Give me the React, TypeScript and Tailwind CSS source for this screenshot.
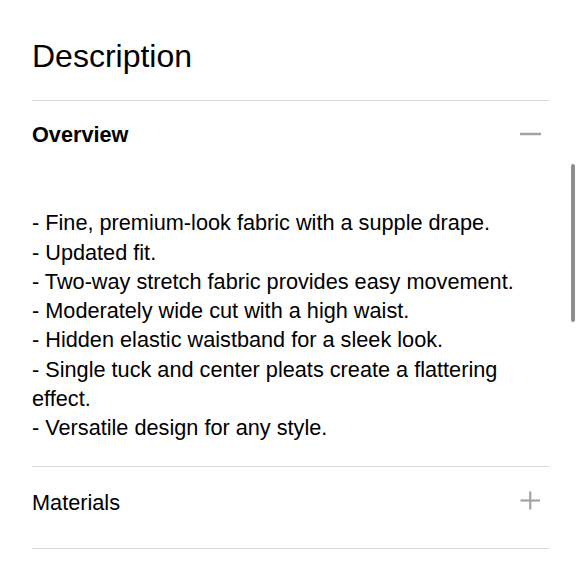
const overview = [
  "- Fine, premium-look fabric with a supple drape.",
  "- Updated fit.",
  "- Two-way stretch fabric provides easy movement.",
  "- Moderately wide cut with a high waist.",
  "- Hidden elastic waistband for a sleek look.",
  "- Single tuck and center pleats create a flattering effect.",
  "- Versatile design for any style.",
]

function Minus() {
  return (
    <svg width="21" height="21" viewBox="0 0 21 21" className="block">
      <line x1="0" y1="10.5" x2="21" y2="10.5" stroke="#a3a3a3" strokeWidth="2.4" />
    </svg>
  )
}

function Plus() {
  return (
    <svg width="21" height="21" viewBox="0 0 21 21" className="block">
      <line x1="0.5" y1="10.5" x2="20" y2="10.5" stroke="#a3a3a3" strokeWidth="2.2" />
      <line x1="10.25" y1="1.5" x2="10.25" y2="19.5" stroke="#a3a3a3" strokeWidth="2.2" />
    </svg>
  )
}

export default function App() {
  return (
    <div className="relative w-[580px] h-[580px] overflow-hidden bg-white font-['Liberation_Sans',Arial,sans-serif] text-black">
      <div className="pl-[32px] pr-[31px] pt-[40px]">
        <h2 className="text-[32px] leading-none font-normal">Description</h2>

        <div className="mt-[28px] h-px bg-[#dadada]" />

        {/* Overview, expanded */}
        <div className="pt-[22.5px] flex items-center justify-between">
          <span className="text-[21.7px] leading-none font-bold">Overview</span>
          <span className="mr-[8px] -translate-y-[0.5px]">
            <Minus />
          </span>
        </div>
        <div className="mt-[63px] mb-[23.7px] text-[21.7px] leading-[29.3px]">
          {overview.map((line) => (
            <p key={line}>{line}</p>
          ))}
        </div>

        <div className="h-px bg-[#dadada]" />

        {/* Materials, collapsed */}
        <div className="pt-[24.8px] pb-[34.2px] flex items-center justify-between">
          <span className="text-[21.7px] leading-none">Materials</span>
          <span className="mr-[8px] -translate-y-[2px]">
            <Plus />
          </span>
        </div>

        <div className="h-px bg-[#dadada]" />
      </div>

      {/* scroll indicator */}
      <div className="absolute left-[571px] top-[164px] w-[4px] h-[158px] rounded-full bg-[#8e8e8e]" />
    </div>
  )
}
